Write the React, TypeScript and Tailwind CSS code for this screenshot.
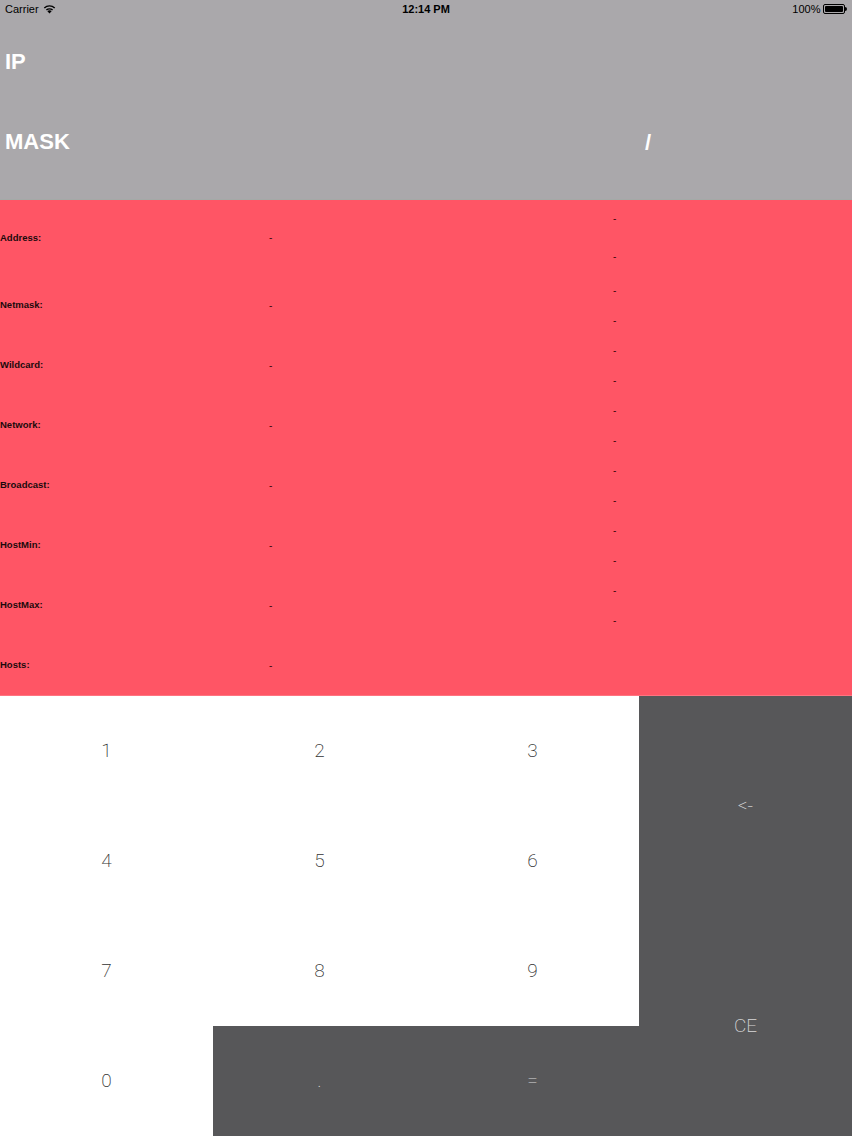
import React from 'react';

const rows = [
  { label: 'Address:', first: true, sub: true },
  { label: 'Netmask:', sub: true },
  { label: 'Wildcard:', sub: true },
  { label: 'Network:', sub: true },
  { label: 'Broadcast:', sub: true },
  { label: 'HostMin:', sub: true },
  { label: 'HostMax:', sub: true },
  { label: 'Hosts:', sub: false },
];

function StatusBar() {
  return (
    <div className="h-[18px] flex items-center justify-between px-[5px] text-[11px] text-black">
      <div className="flex items-center gap-[4px] w-[120px]">
        <span>Carrier</span>
        <svg width="13" height="10" viewBox="0 0 13 10">
          <path d="M6.5 9.5 L4.4 7.2 A3 3 0 0 1 8.6 7.2 Z" fill="#000" />
          <path d="M2.9 5.6 A5.2 5.2 0 0 1 10.1 5.6 L9.1 6.6 A3.8 3.8 0 0 0 3.9 6.6 Z" fill="#000" />
          <path d="M0.8 3.5 A8.2 8.2 0 0 1 12.2 3.5 L11.2 4.5 A6.8 6.8 0 0 0 1.8 4.5 Z" fill="#000" />
        </svg>
      </div>
      <span className="font-semibold">12:14 PM</span>
      <div className="flex items-center justify-end gap-[3px] w-[120px]">
        <span>100%</span>
        <div className="flex items-center">
          <div className="w-[22px] h-[10px] rounded-[2px] border border-black p-[1px]">
            <div className="w-full h-full bg-black rounded-[1px]" />
          </div>
          <div className="w-[1.5px] h-[4px] bg-black rounded-r-sm" />
        </div>
      </div>
    </div>
  );
}

function Key({ label, dark, span }: { label: string; dark?: boolean; span?: boolean }) {
  return (
    <div
      className={`flex items-center justify-center text-[19px] font-extralight ${
        dark ? 'bg-[#575759] text-[#d8d8d8]' : 'bg-white text-[#333333]'
      } ${span ? 'row-span-2' : ''}`}
    >
      {label}
    </div>
  );
}

export default function App() {
  return (
    <div
      className="w-[852px] h-[1136px] overflow-hidden flex flex-col"
      style={{ fontFamily: '"Liberation Sans", Arial, sans-serif' }}
    >
      <div className="h-[200px] bg-[#aaa8ab] border-b border-[#a3aaa7] flex flex-col">
        <StatusBar />
        <div className="h-[84px] flex items-center pt-[2px] pl-[5px] text-white font-bold text-[22px]">IP</div>
        <div className="h-[78px] flex items-center text-white font-bold text-[22px]">
          <span className="pl-[5px] w-[645px]">MASK</span>
          <span className="mt-[3px]">/</span>
        </div>
      </div>

      <div className="h-[496px] bg-[#ff5565] border-b border-[#ff7380] flex flex-col">
        {rows.map(r => (
          <div key={r.label} className={`flex ${r.first ? 'h-[75px]' : 'h-[60px]'}`}>
            <div className="w-[269px] flex items-center pt-[1px] text-[9.5px] font-bold text-[#1a0a0c]">{r.label}</div>
            <div className="w-[344px] flex items-center text-[10px] text-[#3a0a10]">-</div>
            <div className="flex-1 flex flex-col">
              {r.sub && (
                <>
                  <div className="flex-1 flex items-center text-[10px] text-[#3a0a10]">-</div>
                  <div className="flex-1 flex items-center text-[10px] text-[#3a0a10]">-</div>
                </>
              )}
            </div>
          </div>
        ))}
      </div>

      <div className="flex-1 grid grid-cols-4 grid-rows-4" style={{ fontFamily: 'Roboto, "Liberation Sans", sans-serif' }}>
        <Key label="1" />
        <Key label="2" />
        <Key label="3" />
        <Key label="<-" dark span />
        <Key label="4" />
        <Key label="5" />
        <Key label="6" />
        <Key label="7" />
        <Key label="8" />
        <Key label="9" />
        <Key label="CE" dark span />
        <Key label="0" />
        <Key label="." dark />
        <Key label="=" dark />
      </div>
    </div>
  );
}
